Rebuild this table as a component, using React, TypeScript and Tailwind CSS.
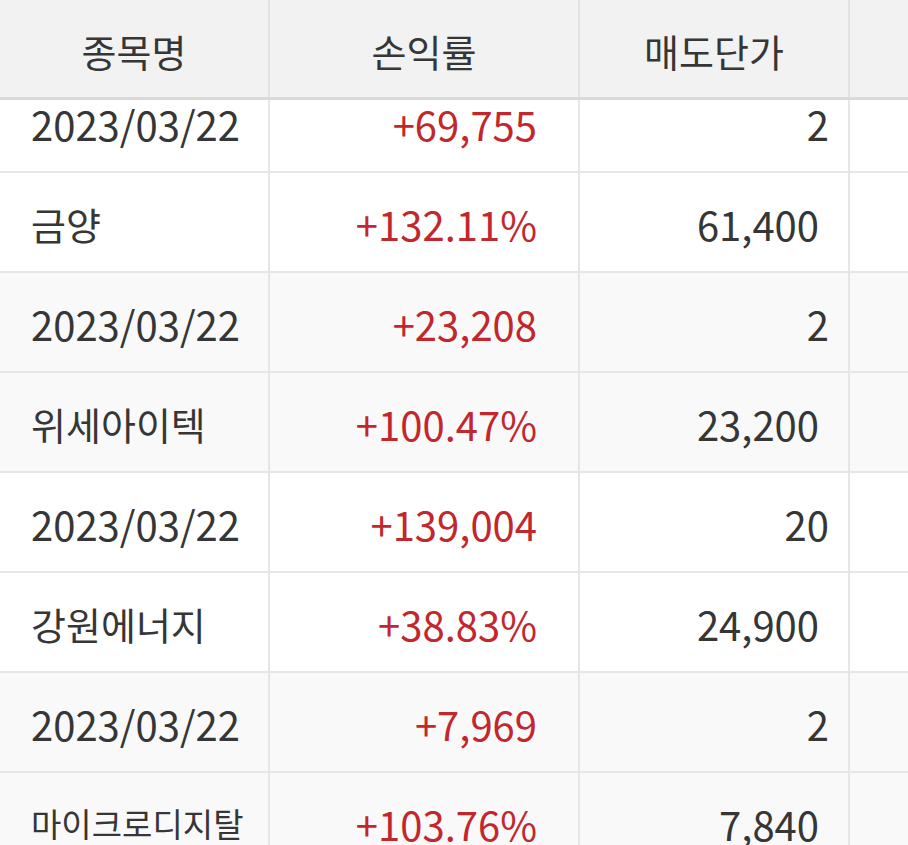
const rows = [
  { a: "2023/03/22", b: "+69,755", c: "2", cPad: "pr-[19px]", bg: "bg-white", num: true },
  { a: "금양", b: "+132.11%", c: "61,400", cPad: "pr-[29px]", bg: "bg-white", num: false },
  { a: "2023/03/22", b: "+23,208", c: "2", cPad: "pr-[19px]", bg: "bg-[#f9f9f9]", num: true },
  { a: "위세아이텍", b: "+100.47%", c: "23,200", cPad: "pr-[29px]", bg: "bg-[#f9f9f9]", num: false },
  { a: "2023/03/22", b: "+139,004", c: "20", cPad: "pr-[19px]", bg: "bg-white", num: true },
  { a: "강원에너지", b: "+38.83%", c: "24,900", cPad: "pr-[29px]", bg: "bg-white", num: false },
  { a: "2023/03/22", b: "+7,969", c: "2", cPad: "pr-[19px]", bg: "bg-[#f9f9f9]", num: true },
  { a: "마이크로디지탈", b: "+103.76%", c: "7,840", cPad: "pr-[29px]", bg: "bg-[#f9f9f9]", num: false },
];

const font = { fontFamily: '"Noto Sans CJK KR", "Noto Sans", sans-serif' };

export default function App() {
  return (
    <div className="h-[845px] w-[908px] overflow-hidden bg-white text-[#363636]" style={font}>
      {/* header */}
      <div className="relative z-10 grid h-[100px] grid-cols-[270px_310px_270px_1fr] border-b-[3px] border-[#d9d9d9] bg-[#f2f2f2] text-[38px]">
        <div className="flex items-center justify-center border-r-2 border-[#e2e2e2] pt-[4px]">종목명</div>
        <div className="flex items-center justify-center border-r-2 border-[#e2e2e2] pt-[4px]">손익률</div>
        <div className="flex items-center justify-center border-r-2 border-[#e2e2e2] pt-[4px]">매도단가</div>
        <div></div>
      </div>

      {/* body, scrolled a little */}
      <div className="-mt-[27px]">
        {rows.map((r, i) => (
          <div
            key={i}
            className={`grid h-[100px] grid-cols-[270px_310px_270px_1fr] border-b-2 border-[#e6e6e6] ${r.bg}`}
          >
            <div
              className={`flex items-center whitespace-nowrap border-r-2 border-[#e6e6e6] pl-[31px] pt-[3px] ${
                r.num ? "text-[40px]" : r.a.length > 5 ? "text-[33px]" : "text-[38px]"
              }`}
            >
              {r.a}
            </div>
            <div className="flex items-center justify-end border-r-2 border-[#e6e6e6] pr-[41px] pt-[3px] text-[40px] text-[#c2272d]">
              {r.b}
            </div>
            <div className={`flex items-center justify-end border-r-2 border-[#e6e6e6] pt-[3px] text-[40px] ${r.cPad}`}>
              {r.c}
            </div>
            <div></div>
          </div>
        ))}
      </div>
    </div>
  );
}
